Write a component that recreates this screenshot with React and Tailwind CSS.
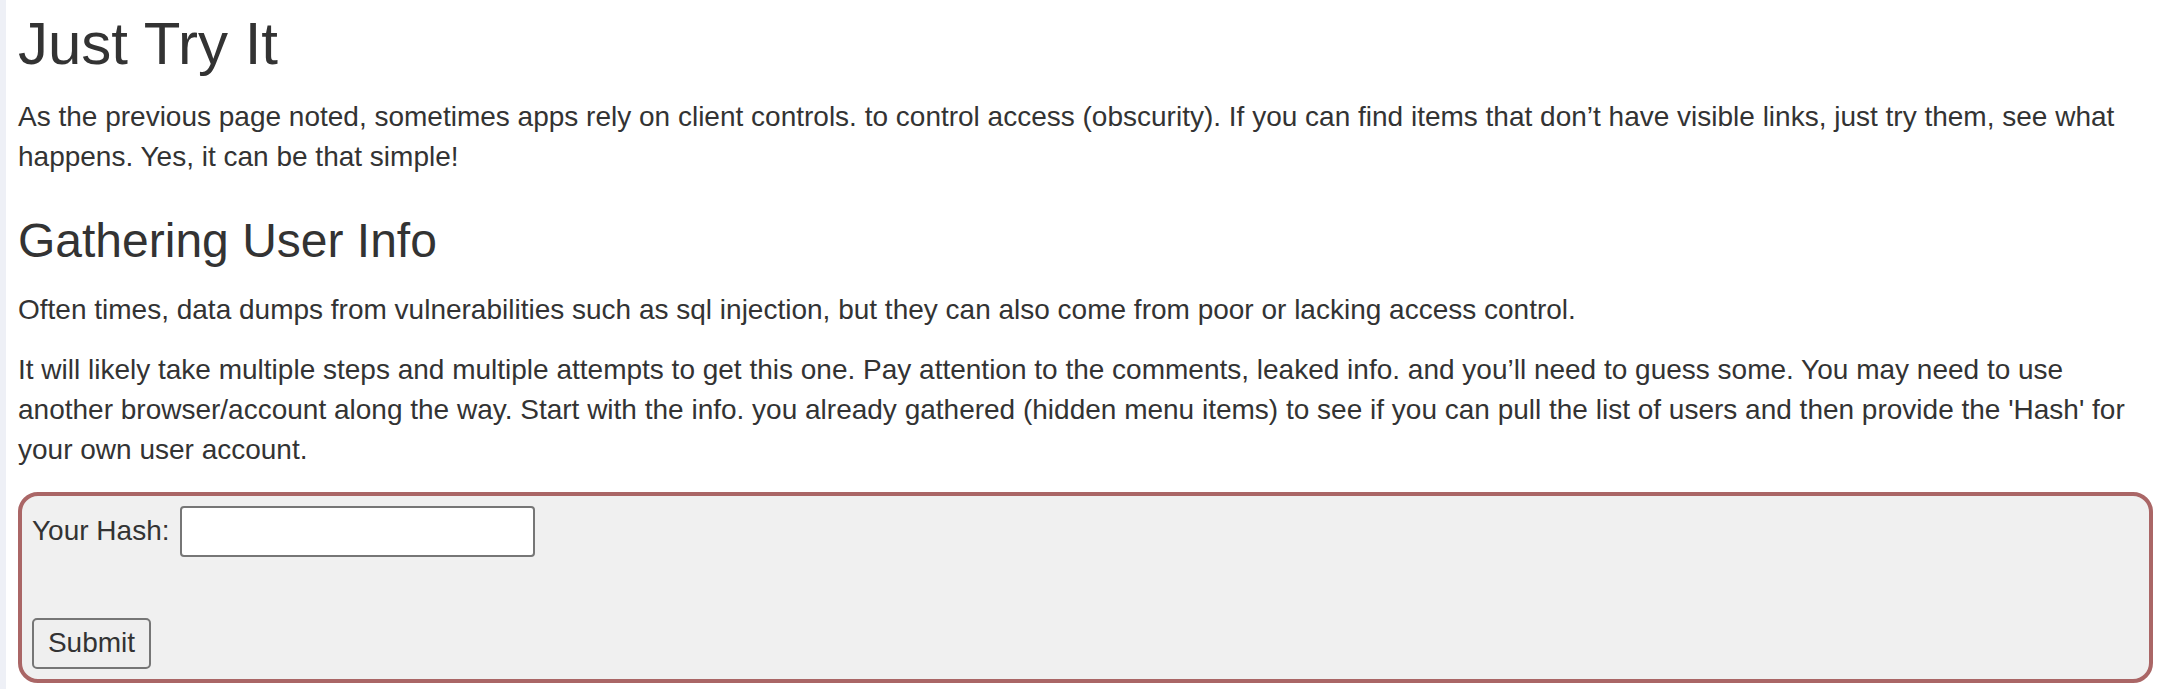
import React from 'react';

const App = () => {
  return (
    <div
      className="flex min-h-screen bg-white text-[#333333]"
      style={{ fontFamily: "'Liberation Sans', Arial, Helvetica, sans-serif" }}
    >
      {/* left gutter strip */}
      <div className="w-[6px] shrink-0 bg-[#eef0f6]"></div>

      <div className="flex-1 pl-[12px] pr-[9px]">
        <h1 className="mt-[11px] mb-[20px] text-[60px] leading-[66px] font-normal">Just Try It</h1>
        <p className="mb-[20px] text-[28px] leading-[40px]">
          As the previous page noted, sometimes apps rely on client controls. to control access (obscurity). If you can find items that don’t have visible links, just try them, see what happens. Yes, it can be that simple!
        </p>

        <h3 className="mt-[38px] mb-[22px] text-[48px] leading-[52.8px] font-normal">Gathering User Info</h3>
        <p className="mb-[20px] text-[28px] leading-[40px]">
          Often times, data dumps from vulnerabilities such as sql injection, but they can also come from poor or lacking access control.
        </p>
        <p className="mb-[22px] text-[28px] leading-[40px]">
          It will likely take multiple steps and multiple attempts to get this one. Pay attention to the comments, leaked info. and you’ll need to guess some. You may need to use another browser/account along the way. Start with the info. you already gathered (hidden menu items) to see if you can pull the list of users and then provide the 'Hash' for your own user account.
        </p>

        {/* attack form */}
        <form
          className="rounded-[20px] border-4 border-[#aa6666] bg-[#f0f0f0] px-[10px] pt-[10px] pb-[10px]"
          onSubmit={e => e.preventDefault()}
        >
          <div className="flex items-center gap-[10px]">
            <label className="text-[28px] leading-[40px]">Your Hash:</label>
            <input
              type="text"
              className="h-[51px] w-[355px] rounded-[4px] border-2 border-[#767676] bg-white px-2 text-[28px] outline-none"
            />
          </div>
          <button
            type="submit"
            className="mt-[61px] block h-[51px] w-[119px] rounded-[5px] border-2 border-[#767676] bg-[#efefef] text-[28px] leading-none text-[#333333]"
          >
            Submit
          </button>
        </form>
      </div>
    </div>
  );
};

export default App;
